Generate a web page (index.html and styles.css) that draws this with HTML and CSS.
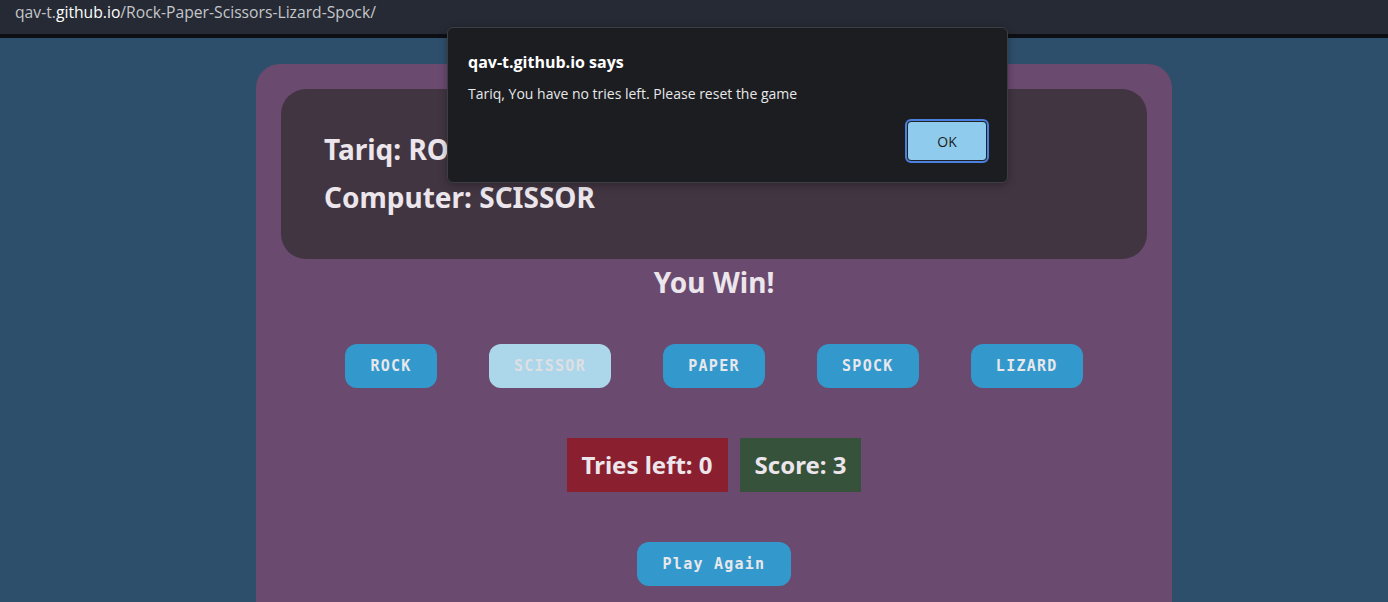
FILE: index.html
```html
<!DOCTYPE html>
<html>
<head>
<meta charset="utf-8">
<link rel="stylesheet" href="styles.css">
</head>
<body>
<div class="urlbar"><span class="dim">qav-t.</span><span class="host">github.io</span><span class="dim">/Rock-Paper-Scissors-Lizard-Spock/</span></div>
<div class="strip"></div>
<main class="page">
  <section class="card">
    <div class="board">
      <h2 class="line">Tariq: ROCK</h2>
      <h2 class="line">Computer: SCISSOR</h2>
    </div>
    <h2 class="result">You Win!</h2>
    <div class="choices">
      <button class="btn">ROCK</button>
      <button class="btn disabled">SCISSOR</button>
      <button class="btn">PAPER</button>
      <button class="btn">SPOCK</button>
      <button class="btn">LIZARD</button>
    </div>
    <div class="stats">
      <div class="stat tries">Tries left: 0</div>
      <div class="stat score">Score: 3</div>
    </div>
    <div class="again-row"><button class="btn again">Play Again</button></div>
  </section>
</main>
<div class="dialog">
  <div class="dlg-title">qav-t.github.io says</div>
  <div class="dlg-msg">Tariq, You have no tries left. Please reset the game</div>
  <div class="dlg-actions"><button class="ok">OK</button></div>
</div>
</body>
</html>
```
FILE: styles.css
```css
html, body {
  margin: 0;
  padding: 0;
  height: 100%;
  overflow: hidden;
}
body {
  background: #2e4f6b;
  font-family: "Noto Sans", "DejaVu Sans", sans-serif;
  position: relative;
}
.urlbar {
  height: 34px;
  background: #262a34;
  font-family: "Open Sans", "Noto Sans", sans-serif;
  font-size: 15.7px;
  line-height: 24px;
  padding-left: 15px;
  box-sizing: border-box;
  color: #c4c6ca;
}
.urlbar .host { color: #ffffff; }
.strip {
  height: 4px;
  background: #0e0f14;
}
.page {
  padding-top: 26px;
}
.card {
  margin-left: 256px;
  width: 916px;
  height: 600px;
  background: #6b4a70;
  border-radius: 24px;
  padding: 25px;
  box-sizing: border-box;
  color: #ece6ec;
}
.board {
  background: #413541;
  border-radius: 25px;
  height: 170px;
  padding: 36px 43px 0;
  box-sizing: border-box;
}
.line {
  margin: 0;
  font-size: 28px;
  font-weight: 700;
  line-height: 48px;
  color: #ece6ec;
}
.result {
  margin: 3px 0 0;
  text-align: center;
  font-size: 28px;
  line-height: 40px;
  font-weight: 700;
}
.choices {
  display: flex;
  justify-content: center;
  gap: 52px;
  margin-top: 42px;
}
.btn {
  font-family: "DejaVu Sans Mono", monospace;
  font-weight: 700;
  font-size: 15px;
  letter-spacing: 1.25px;
  color: #e8e8ec;
  background: #3399cc;
  border: none;
  border-radius: 12px;
  height: 44px;
  padding: 0 25.2px;
}
.btn.disabled {
  background: #acd6ea;
  color: #dedfe3;
}
.stats {
  display: flex;
  justify-content: center;
  gap: 12px;
  margin-top: 50px;
}
.stat {
  height: 54px;
  line-height: 54px;
  padding: 0 15px;
  font-size: 24px;
  font-weight: 700;
  color: #ece6ec;
}
.tries { background: #8a1f30; }
.score { background: #37523a; }
.again-row {
  display: flex;
  justify-content: center;
  margin-top: 50px;
}
.again {
  padding: 0 26px;
}
.dialog {
  position: absolute;
  left: 447px;
  top: 27px;
  width: 561px;
  height: 156px;
  box-sizing: border-box;
  background: #1b1d21;
  border: 1px solid #3c3e43;
  border-radius: 6px;
  padding: 22px 20px 0 20px;
  font-family: "Open Sans", "Noto Sans", sans-serif;
  color: #ffffff;
  box-shadow: 0 2px 8px rgba(0,0,0,0.3);
}
.dlg-title {
  font-size: 16px;
  font-weight: 700;
  line-height: 24px;
}
.dlg-msg {
  font-size: 14px;
  line-height: 20px;
  margin-top: 10px;
  color: #e8e8e8;
}
.dlg-actions {
  display: flex;
  justify-content: flex-end;
  margin-top: 17px;
}
.ok {
  width: 80px;
  height: 40px;
  box-sizing: border-box;
  background: #8fcbec;
  border: 1px solid #202226;
  outline: 2px solid #4a80de;
  outline-offset: 0;
  border-radius: 4px;
  font-family: "Open Sans", "Noto Sans", sans-serif;
  font-size: 14px;
  color: #1b1d21;
}
```
